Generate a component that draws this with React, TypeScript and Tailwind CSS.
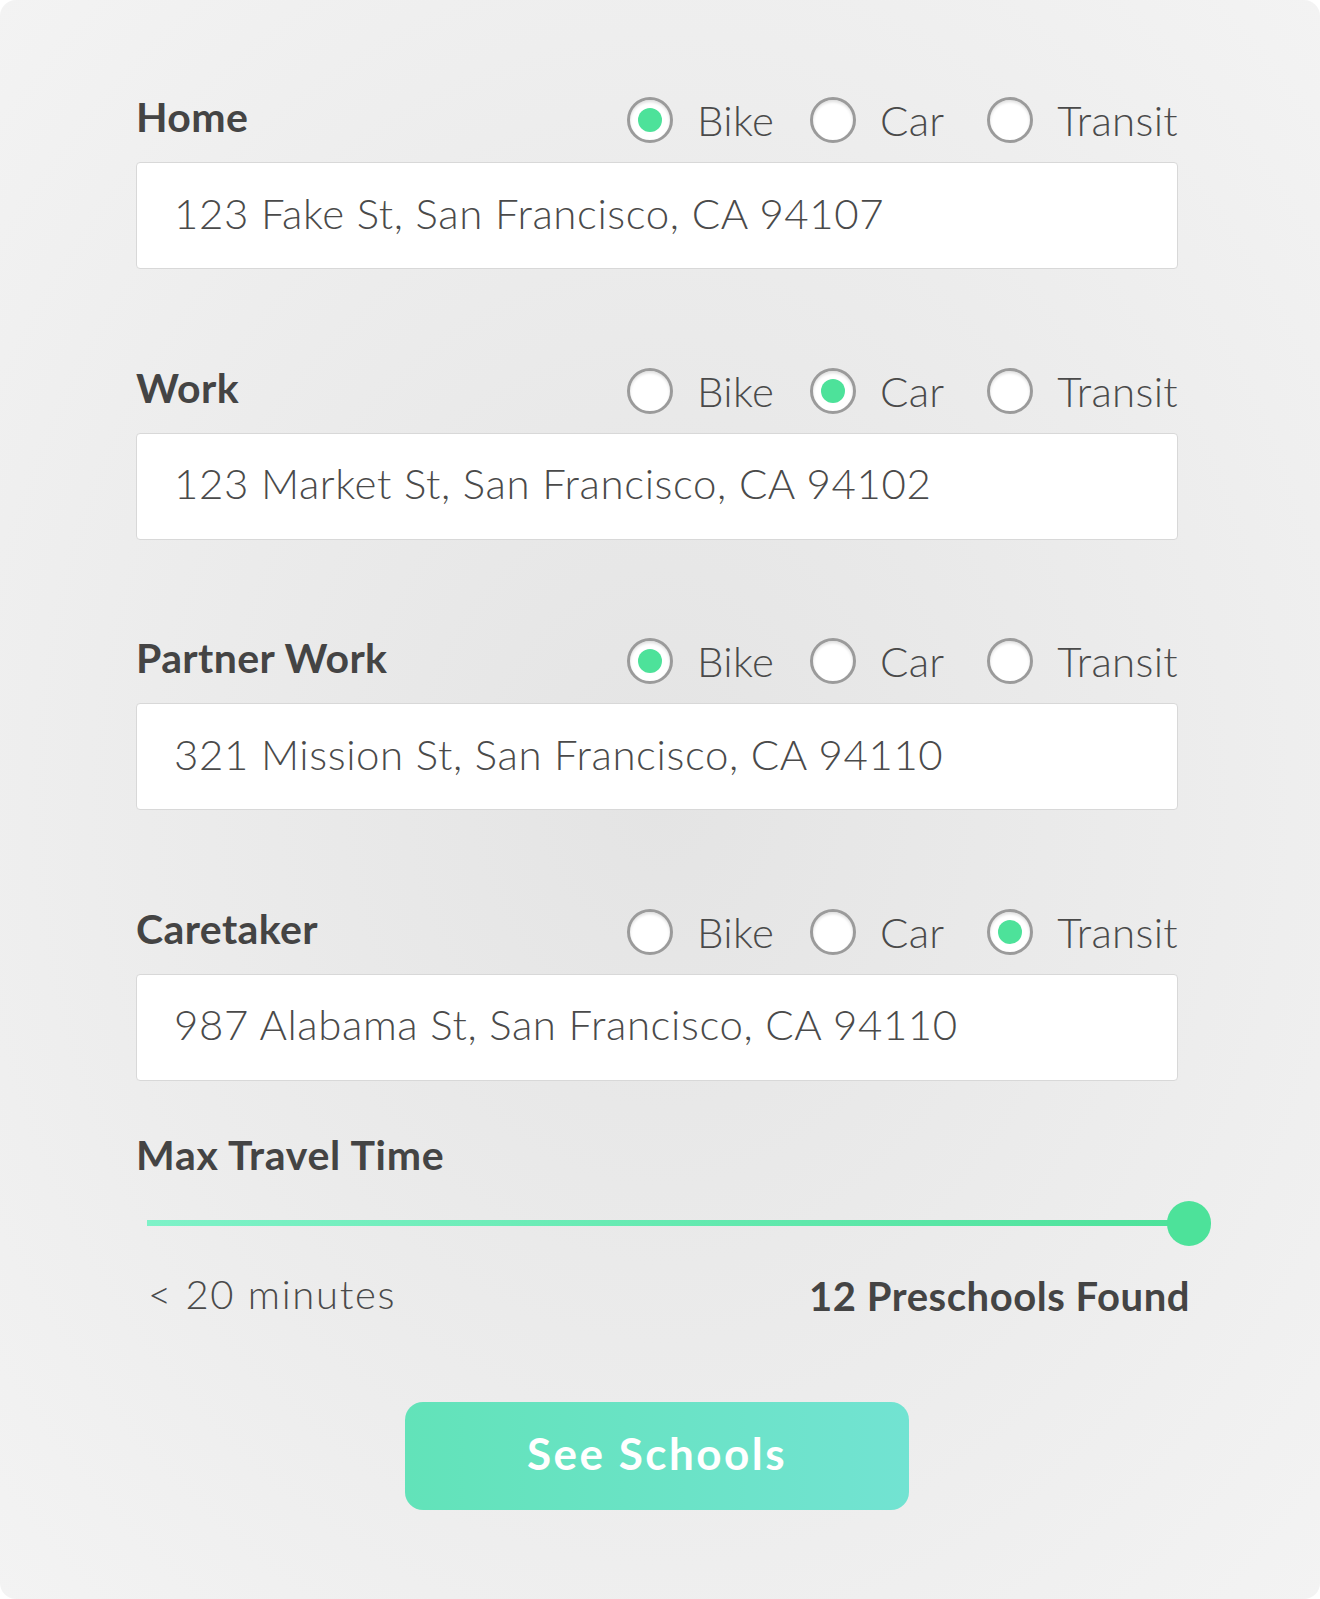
import React from "react";

type Mode = "Bike" | "Car" | "Transit";

const sections: { label: string; value: string; mode: Mode }[] = [
  { label: "Home", value: "123 Fake St, San Francisco, CA 94107", mode: "Bike" },
  { label: "Work", value: "123 Market St, San Francisco, CA 94102", mode: "Car" },
  { label: "Partner Work", value: "321 Mission St, San Francisco, CA 94110", mode: "Bike" },
  { label: "Caretaker", value: "987 Alabama St, San Francisco, CA 94110", mode: "Transit" },
];

function Radio({ checked }: { checked: boolean }) {
  return (
    <div className="w-[46px] h-[46px] shrink-0 rounded-full border-[3px] border-[#9b9b9b] bg-white shadow-[inset_0_2px_3px_rgba(0,0,0,0.12)] flex items-center justify-center">
      {checked && <div className="w-[24px] h-[24px] rounded-full bg-[#4de29a]" />}
    </div>
  );
}

function Option({ name, checked, w }: { name: Mode; checked: boolean; w: string }) {
  return (
    <div className={`flex items-center gap-[24px] ${w}`}>
      <Radio checked={checked} />
      <span className="text-[42px] font-light leading-none text-[#4a4a4a] tracking-[0.3px]">{name}</span>
    </div>
  );
}

export default function App() {
  return (
    <div className="w-[1320px] h-[1599px] bg-white" style={{ fontFamily: "Lato, 'Noto Sans', sans-serif" }}>
      <div className="w-full h-full rounded-[16px] bg-[radial-gradient(ellipse_at_center,#e4e4e4_0%,#ececec_55%,#f3f3f3_100%)] pl-[136px] pr-[142px] pt-[97px]">
        <div className="flex flex-col gap-[98.5px]">
          {sections.map((s) => (
            <div key={s.label} className="flex flex-col gap-[19px]">
              <div className="flex items-center justify-between h-[46px]">
                <span className="text-[41px] font-bold leading-none text-[#444444] tracking-[0.4px] -mt-[7px]">{s.label}</span>
                <div className="flex items-center w-[551px]">
                  <Option name="Bike" checked={s.mode === "Bike"} w="w-[183px]" />
                  <Option name="Car" checked={s.mode === "Car"} w="w-[177px]" />
                  <div className="flex-1 flex justify-end">
                    <Option name="Transit" checked={s.mode === "Transit"} w="" />
                  </div>
                </div>
              </div>
              <div className="h-[107px] bg-white border-[1.5px] border-[#d8d8d8] rounded-[4px] flex items-center pl-[37px] pb-[6px]">
                <span className="text-[42px] font-light leading-none text-[#4a4a4a] tracking-[0.6px]">{s.value}</span>
              </div>
            </div>
          ))}
        </div>

        <div className="mt-[53px] text-[41px] font-bold leading-none text-[#444444] tracking-[0.7px]">Max Travel Time</div>

        <div className="relative ml-[11px] w-[1064px] h-[45px] mt-[26px] flex items-center">
          <div className="h-[6px] w-[1042px] bg-[linear-gradient(to_right,#7ef2c8,#4de29a)]" />
          <div className="absolute right-0 top-0 w-[44px] h-[45px] rounded-full bg-[#4de29a]" />
        </div>

        <div className="ml-[12px] w-[1042px] flex items-center justify-between mt-[30px]">
          <span className="text-[40px] font-light leading-none text-[#4a4a4a] tracking-[1.7px] -mt-[4px]">&lt; 20 minutes</span>
          <span className="text-[40px] font-bold leading-none text-[#444444] tracking-[0.55px]">12 Preschools Found</span>
        </div>

        <div className="flex justify-center mt-[86px]">
          <button className="w-[504px] h-[108px] rounded-[18px] bg-[linear-gradient(to_right,#62e3b9,#72e3d2)] text-white text-[44px] font-bold tracking-[2.5px] flex items-center justify-center pb-[6px]">
            See Schools
          </button>
        </div>
      </div>
    </div>
  );
}
